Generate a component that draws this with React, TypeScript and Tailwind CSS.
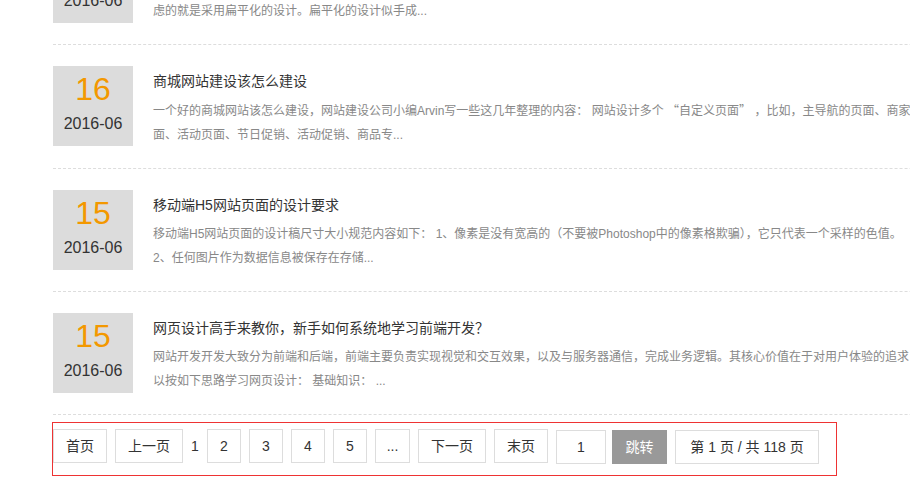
import React from 'react'

type Post = {
  day: string
  month: string
  title: string
  lines: React.ReactNode[]
}

const Q = ({ children }: { children: React.ReactNode }) => (
  <span className="font-['Noto_Sans_CJK_SC',sans-serif]">{children}</span>
)

const posts: Post[] = [
  {
    day: '16',
    month: '2016-06',
    title: '网站设计的扁平化趋势',
    lines: [
      '扁平化设计是近几年网站设计的主流风格，很多企业在网站改版的时候，首先考',
      '虑的就是采用扁平化的设计。扁平化的设计似手成...',
    ],
  },
  {
    day: '16',
    month: '2016-06',
    title: '商城网站建设该怎么建设',
    lines: [
      <>
        一个好的商城网站该怎么建设，网站建设公司小编Arvin写一些这几年整理的内容： 网站设计多个 <Q>“</Q>自定义页面<Q>”</Q> ，比如，主导航的页面、商家页面、品牌页面、专题页
      </>,
      '面、活动页面、节日促销、活动促销、商品专...',
    ],
  },
  {
    day: '15',
    month: '2016-06',
    title: '移动端H5网站页面的设计要求',
    lines: [
      '移动端H5网站页面的设计稿尺寸大小规范内容如下： 1、像素是没有宽高的（不要被Photoshop中的像素格欺骗），它只代表一个采样的色值。',
      '2、任何图片作为数据信息被保存在存储...',
    ],
  },
  {
    day: '15',
    month: '2016-06',
    title: '网页设计高手来教你，新手如何系统地学习前端开发？',
    lines: [
      '网站开发开发大致分为前端和后端，前端主要负责实现视觉和交互效果，以及与服务器通信，完成业务逻辑。其核心价值在于对用户体验的追求，可',
      '以按如下思路学习网页设计： 基础知识： ...',
    ],
  },
]

function PostItem({ post }: { post: Post }) {
  return (
    <div className="flex pt-[21px] pb-[21px] border-b border-dashed border-[#dddddd]">
      <div className="w-[80px] h-[80px] shrink-0 bg-[#dcdcdc] flex flex-col items-center">
        <span className="mt-[3px] text-[32px] leading-[40px] text-[#f39800]">{post.day}</span>
        <span className="mt-[5px] text-[16px] leading-[20px] text-[#333333]">{post.month}</span>
      </div>
      <div className="ml-[20px] min-w-0">
        <h3 className="mt-[3px] text-[14px] leading-[24px] text-[#333333] font-normal whitespace-nowrap">{post.title}</h3>
        <div className="mt-[5px] text-[12px] leading-[24px] text-[#888888]">
          {post.lines.map((line, i) => (
            <p key={i} className="whitespace-nowrap">{line}</p>
          ))}
        </div>
      </div>
    </div>
  )
}

function PageBtn({ children, className = '' }: { children: React.ReactNode; className?: string }) {
  return (
    <a className={`h-[34px] border border-[#dddddd] flex items-center justify-center text-[14px] text-[#333333] bg-white ${className}`}>
      {children}
    </a>
  )
}

export default function App() {
  return (
    <div className="w-[910px] h-[478px] overflow-hidden bg-white font-['Liberation_Sans','Noto_Sans_CJK_SC',sans-serif]">
      <div className="ml-[53px] mt-[-78px] w-[1100px]">
        {posts.map((p, i) => (
          <PostItem key={i} post={p} />
        ))}
      </div>

      {/* 分页 */}
      <div className="ml-[52px] mt-[7px] w-[785px] h-[54px] border border-[#ee3333] pt-[6px]">
        <div className="flex items-start gap-[8px]">
          <PageBtn className="w-[54px]">首页</PageBtn>
          <PageBtn className="w-[68px]">上一页</PageBtn>
          <span className="h-[34px] w-[8px] flex items-center justify-center text-[14px] text-[#333333]">1</span>
          <PageBtn className="w-[34px]">2</PageBtn>
          <PageBtn className="w-[34px]">3</PageBtn>
          <PageBtn className="w-[34px]">4</PageBtn>
          <PageBtn className="w-[34px]">5</PageBtn>
          <PageBtn className="w-[35px]">...</PageBtn>
          <PageBtn className="w-[68px]">下一页</PageBtn>
          <PageBtn className="w-[54px]">末页</PageBtn>
          <div className="flex items-start gap-[6px] mt-px">
            <input
              type="text"
              defaultValue="1"
              className="w-[50px] h-[34px] border border-[#dddddd] text-center text-[14px] text-[#333333] outline-none"
            />
            <button className="w-[55px] h-[34px] bg-[#999999] text-white text-[14px]">跳转</button>
          </div>
          <span className="mt-px h-[34px] w-[144px] border border-[#dddddd] flex items-center justify-center text-[14px] text-[#333333]">
            第 1 页 / 共 118 页
          </span>
        </div>
      </div>
    </div>
  )
}
